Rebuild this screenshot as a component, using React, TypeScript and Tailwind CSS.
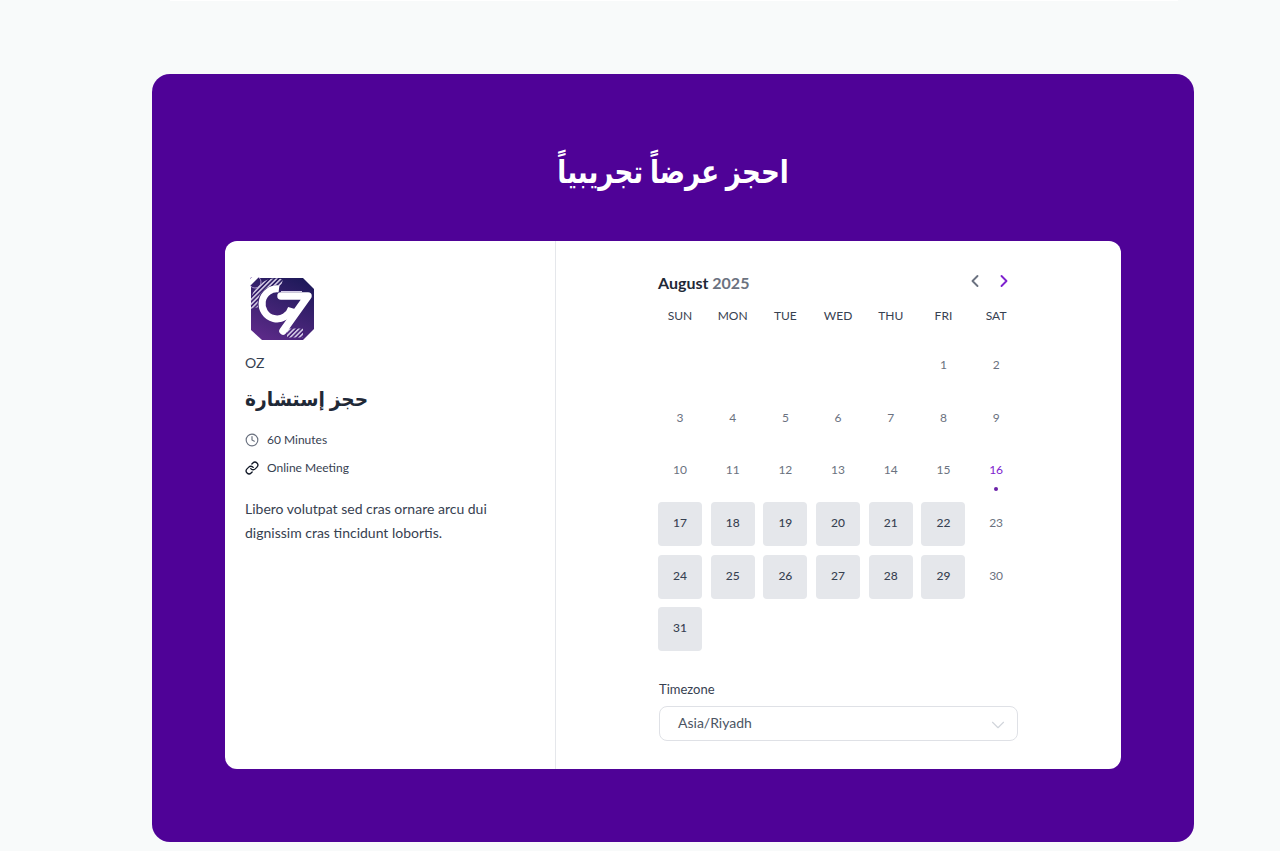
import React from "react";
import { ChevronLeft, ChevronRight, ChevronDown, Clock, Link } from "lucide-react";

const heads = ["SUN", "MON", "TUE", "WED", "THU", "FRI", "SAT"];
const available = new Set([17, 18, 19, 20, 21, 22, 24, 25, 26, 27, 28, 29, 31]);
const cells: (number | null)[] = [null, null, null, null, null, ...Array.from({ length: 31 }, (_, i) => i + 1)];

function Logo() {
  return (
    <svg width="66" height="66" viewBox="0 0 66 66" className="block">
      <defs>
        <linearGradient id="lg" x1="0.75" y1="0" x2="0.25" y2="1">
          <stop offset="0" stopColor="#1f1a5a" />
          <stop offset="1" stopColor="#5b2a88" />
        </linearGradient>
        <pattern id="st" width="3.2" height="3.2" patternUnits="userSpaceOnUse" patternTransform="rotate(45)">
          <rect width="1.5" height="3.2" fill="#d8d0e8" />
        </pattern>
      </defs>
      <polygon points="8,1 53,1 64,12 64,52 53,63 12,63 1,53 1,8" fill="url(#lg)" />
      <circle cx="5" cy="5" r="6" fill="none" stroke="#a993c9" strokeWidth="1" />
      <path d="M4.5 31 A 22 22 0 0 1 32 5.8" fill="none" stroke="url(#st)" strokeWidth="7" />
      <path d="M37 56 L 53 56" stroke="url(#st)" strokeWidth="9" />
      <path d="M29 12 A 15 15 0 1 0 41.5 31" fill="none" stroke="#fff" strokeWidth="7" />
      <path d="M31 19 H58 L33 54" fill="none" stroke="#fff" strokeWidth="7.5" strokeLinecap="round" strokeLinejoin="round" />
      <path d="M31 14.5 H52" stroke="#d8d0e8" strokeWidth="1" />
    </svg>
  );
}

export default function App() {
  return (
    <div className="min-h-[851px] overflow-hidden bg-[#f8fafa] font-['Lato',sans-serif]">
      <div className="mr-[102px] ml-[170px] h-px bg-white" />
      <div className="mt-[73px] mr-[86px] ml-[152px] h-[768px] rounded-[18px] bg-[#4f0297] px-[73px] pt-[73px]">
        <h1 className="h-[48px] scale-x-[0.816] text-center font-['Noto_Sans','DejaVu_Sans',sans-serif] text-[32px] leading-[48px] font-bold text-white" dir="rtl">
          احجز عرضاً تجريبياً
        </h1>
        <div className="mt-[46px] flex h-[528px] rounded-xl bg-white">
          <div className="w-[331px] border-r border-[#e5e7eb] px-5 pt-9">
            <div className="ml-[5px]"><Logo /></div>
            <div className="mt-[10px] text-sm leading-5 text-[#374151]">OZ</div>
            <div className="mt-[12px] h-7 font-['Noto_Sans','DejaVu_Sans',sans-serif] text-xl leading-7 font-bold text-[#1f2937]">
              <span className="inline-block origin-left scale-x-[0.93]" dir="rtl">حجز إستشارة</span>
            </div>
            <div className="mt-[17px] flex h-5 items-center gap-2 text-xs text-[#374151]">
              <Clock size={14} className="text-[#6b7280]" />
              <span>60 Minutes</span>
            </div>
            <div className="mt-2 flex h-5 items-center gap-2 text-xs text-[#374151]">
              <Link size={14} strokeWidth={2.25} className="text-[#111827]" />
              <span>Online Meeting</span>
            </div>
            <p className="mt-[19px] w-[260px] text-sm leading-6 text-[#374151]">
              Libero volutpat sed cras ornare arcu dui dignissim cras tincidunt lobortis.
            </p>
          </div>
          <div className="flex-1 pt-[30px] pl-[102px]">
            <div className="w-[360px]">
              <div className="flex h-6 items-center justify-between">
                <div className="text-base font-bold text-[#1f2937]">
                  August <span className="text-[#6b7280]">2025</span>
                </div>
                <div className="-mt-[5px] flex gap-[9px] pr-[4px]">
                  <ChevronLeft size={20} strokeWidth={2.25} className="text-[#6b7280]" />
                  <ChevronRight size={20} strokeWidth={2.25} className="text-[#7e22ce]" />
                </div>
              </div>
              <div className="mt-[13px] grid w-[358px] grid-cols-[repeat(7,44px)] gap-x-[8.7px]">
                {heads.map((h) => (
                  <div key={h} className="h-4 text-center text-xs leading-4 text-[#374151]">{h}</div>
                ))}
              </div>
              <div className="mt-[20px] grid w-[358px] grid-cols-[repeat(7,44px)] gap-x-[8.7px] gap-y-[8.7px]">
                {cells.map((d, i) => (
                  <div
                    key={i}
                    className={
                      "relative flex h-11 items-center justify-center rounded pb-[2px] text-xs " +
                      (d !== null && available.has(d)
                        ? "bg-[#e5e7eb] font-medium text-[#374151]"
                        : d === 16
                          ? "text-[#7e22ce]"
                          : "text-[#6b7280]")
                    }
                  >
                    {d}
                    {d === 16 && <span className="absolute bottom-[2px] left-1/2 h-1 w-1 -translate-x-1/2 rounded-full bg-[#6b21a8]" />}
                  </div>
                ))}
              </div>
              <div className="mt-[28px] ml-px text-[13px] leading-5 text-[#374151]">Timezone</div>
              <div className="mt-[7px] ml-px flex h-[35px] w-[359px] items-center justify-between rounded-lg border border-[#dfe1e6] pr-[8px] pl-[18px] text-sm text-[#4b5563]">
                <span className="-mt-[2px]">Asia/Riyadh</span>
                <ChevronDown size={22} strokeWidth={1.25} className="mt-[2px] text-[#d1d5db]" />
              </div>
            </div>
          </div>
        </div>
      </div>
    </div>
  );
}
